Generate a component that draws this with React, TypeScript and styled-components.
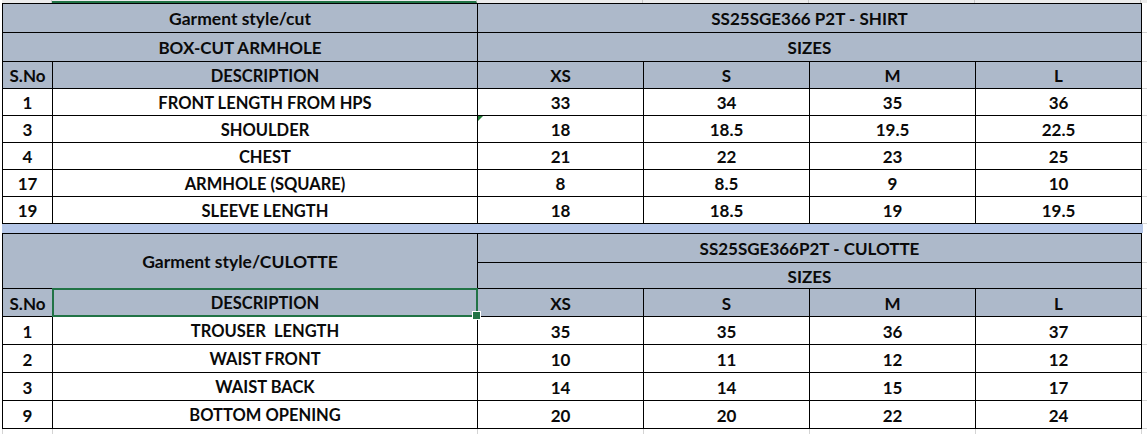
import React from 'react';
import styled, { createGlobalStyle, css } from 'styled-components';

const Global = createGlobalStyle`
  html, body { margin: 0; padding: 0; background: #fff; }
  body { font-family: Lato, "Open Sans", sans-serif; }
  * { box-sizing: border-box; }
`;

const COLS = '50px 425px 166px 166px 166px 166px 1fr';
const HEAD = '#adb9ca';
const GREEN = '#217346';

const Page = styled.div`
  width: 1147px;
  height: 434px;
  overflow: hidden;
  background: #fff;
  display: flex;
  flex-direction: column;
`;

const Strip = styled.div`
  display: grid;
  grid-template-columns: ${COLS};
  height: 3px;
  margin-left: 2px;
  background: #ececec;
`;

const StripCell = styled.div<{ $sel?: boolean }>`
  border-right: 1px solid #c9c9c9;
  ${p => p.$sel && css`border-bottom: 2px solid ${GREEN};`}
`;

const Sheet = styled.div<{ $rows: string }>`
  display: grid;
  grid-template-columns: ${COLS};
  grid-template-rows: ${p => p.$rows};
  margin-left: 2px;
  border-left: 1px solid #000;
`;

type CellProps = {
  $head?: boolean;
  $top?: boolean;
  $span?: number;
  $rowSpan?: number;
  $tri?: boolean;
  $sel?: boolean;
  $size?: number;
};

const Cell = styled.div<CellProps>`
  position: relative;
  display: flex;
  align-items: center;
  justify-content: center;
  border-right: 1px solid #000;
  border-bottom: 1px solid #000;
  ${p => p.$top && css`border-top: 1px solid #000;`}
  background: ${p => (p.$head ? HEAD : '#fff')};
  grid-column: span ${p => p.$span ?? 1};
  grid-row: span ${p => p.$rowSpan ?? 1};
  font-family: Lato, "Open Sans", sans-serif;
  font-weight: 700;
  font-size: ${p => p.$size ?? 17}px;
  color: #0a0a0a;
  white-space: pre;
  padding-top: 1px;
  ${p =>
    p.$tri &&
    css`
      &::before {
        content: '';
        position: absolute;
        top: 0;
        left: 0;
        border-top: 5px solid #1e7b34;
        border-right: 5px solid transparent;
      }
    `}
  ${p =>
    p.$sel &&
    css`
      &::before {
        content: '';
        position: absolute;
        left: -1px;
        top: -1px;
        right: -1px;
        bottom: -1px;
        border: 2px solid ${GREEN};
      }
      &::after {
        content: '';
        position: absolute;
        right: -4px;
        bottom: -4px;
        width: 7px;
        height: 7px;
        background: ${GREEN};
        border: 1px solid #fff;
        z-index: 2;
      }
    `}
`;

const Spill = styled.div<{ $rowSpan?: number }>`
  grid-row: span ${p => p.$rowSpan ?? 1};
  border-bottom: 1px solid #d4d4d4;
  background: #fff;
`;

const Band = styled.div`
  height: 9px;
  margin-left: 2px;
  width: 1141px;
  background: #b4c6e7;
`;

const Tail = styled.div`
  display: grid;
  grid-template-columns: ${COLS};
  margin-left: 2px;
  flex: 1;
  border-left: 1px solid #d4d4d4;
`;

const TailCell = styled.div`
  border-right: 1px solid #d4d4d4;
`;

type Row = { no: string; desc: string; vals: string[]; tri?: boolean };

const shirt: Row[] = [
  { no: '1', desc: 'FRONT LENGTH FROM HPS', vals: ['33', '34', '35', '36'] },
  { no: '3', desc: 'SHOULDER', vals: ['18', '18.5', '19.5', '22.5'], tri: true },
  { no: '4', desc: 'CHEST', vals: ['21', '22', '23', '25'] },
  { no: '17', desc: 'ARMHOLE (SQUARE)', vals: ['8', '8.5', '9', '10'] },
  { no: '19', desc: 'SLEEVE LENGTH', vals: ['18', '18.5', '19', '19.5'] },
];

const culotte: Row[] = [
  { no: '1', desc: 'TROUSER  LENGTH', vals: ['35', '35', '36', '37'] },
  { no: '2', desc: 'WAIST FRONT', vals: ['10', '11', '12', '12'] },
  { no: '3', desc: 'WAIST BACK', vals: ['14', '14', '15', '17'] },
  { no: '9', desc: 'BOTTOM OPENING', vals: ['20', '20', '22', '24'] },
];

const SIZES = ['XS', 'S', 'M', 'L'];
const DESC_SIZE = 16.5;

const DataRows: React.FC<{ rows: Row[] }> = ({ rows }) => (
  <>
    {rows.map((r, i) => (
      <React.Fragment key={i}>
        <Cell>{r.no}</Cell>
        <Cell $size={DESC_SIZE}>{r.desc}</Cell>
        {r.vals.map((v, j) => (
          <Cell key={j} $tri={r.tri && j === 0}>
            {v}
          </Cell>
        ))}
        <Spill />
      </React.Fragment>
    ))}
  </>
);

const SizeHead: React.FC<{ selDesc?: boolean }> = ({ selDesc }) => (
  <>
    <Cell $head>S.No</Cell>
    <Cell $head $sel={selDesc} $size={DESC_SIZE}>
      DESCRIPTION
    </Cell>
    {SIZES.map(s => (
      <Cell $head key={s}>
        {s}
      </Cell>
    ))}
    <Spill />
  </>
);

export default function App() {
  return (
    <Page>
      <Global />
      <Strip>
        <StripCell />
        <StripCell $sel />
        <StripCell />
        <StripCell />
        <StripCell />
        <StripCell />
        <div />
      </Strip>

      <Sheet $rows="30px 29px 27px 27px 27px 27px 27px 27px">
        <Cell $head $top $size={17.5} $span={2}>
          Garment style/cut
        </Cell>
        <Cell $head $top $span={4}>
          SS25SGE366 P2T - SHIRT
        </Cell>
        <Spill />
        <Cell $head $span={2}>
          BOX-CUT ARMHOLE
        </Cell>
        <Cell $head $span={4}>
          SIZES
        </Cell>
        <Spill />
        <SizeHead />
        <DataRows rows={shirt} />
      </Sheet>

      <Band />

      <Sheet $rows="30px 26px 28px 28px 28px 28px 28px">
        <Cell $head $top $size={17.5} $span={2} $rowSpan={2}>
          Garment style/CULOTTE
        </Cell>
        <Cell $head $top $span={4}>
          SS25SGE366P2T - CULOTTE
        </Cell>
        <Spill />
        <Cell $head $span={4}>
          SIZES
        </Cell>
        <Spill />
        <SizeHead selDesc />
        <DataRows rows={culotte} />
      </Sheet>

      <Tail>
        <TailCell />
        <TailCell />
        <TailCell />
        <TailCell />
        <TailCell />
        <TailCell />
        <div />
      </Tail>
    </Page>
  );
}
